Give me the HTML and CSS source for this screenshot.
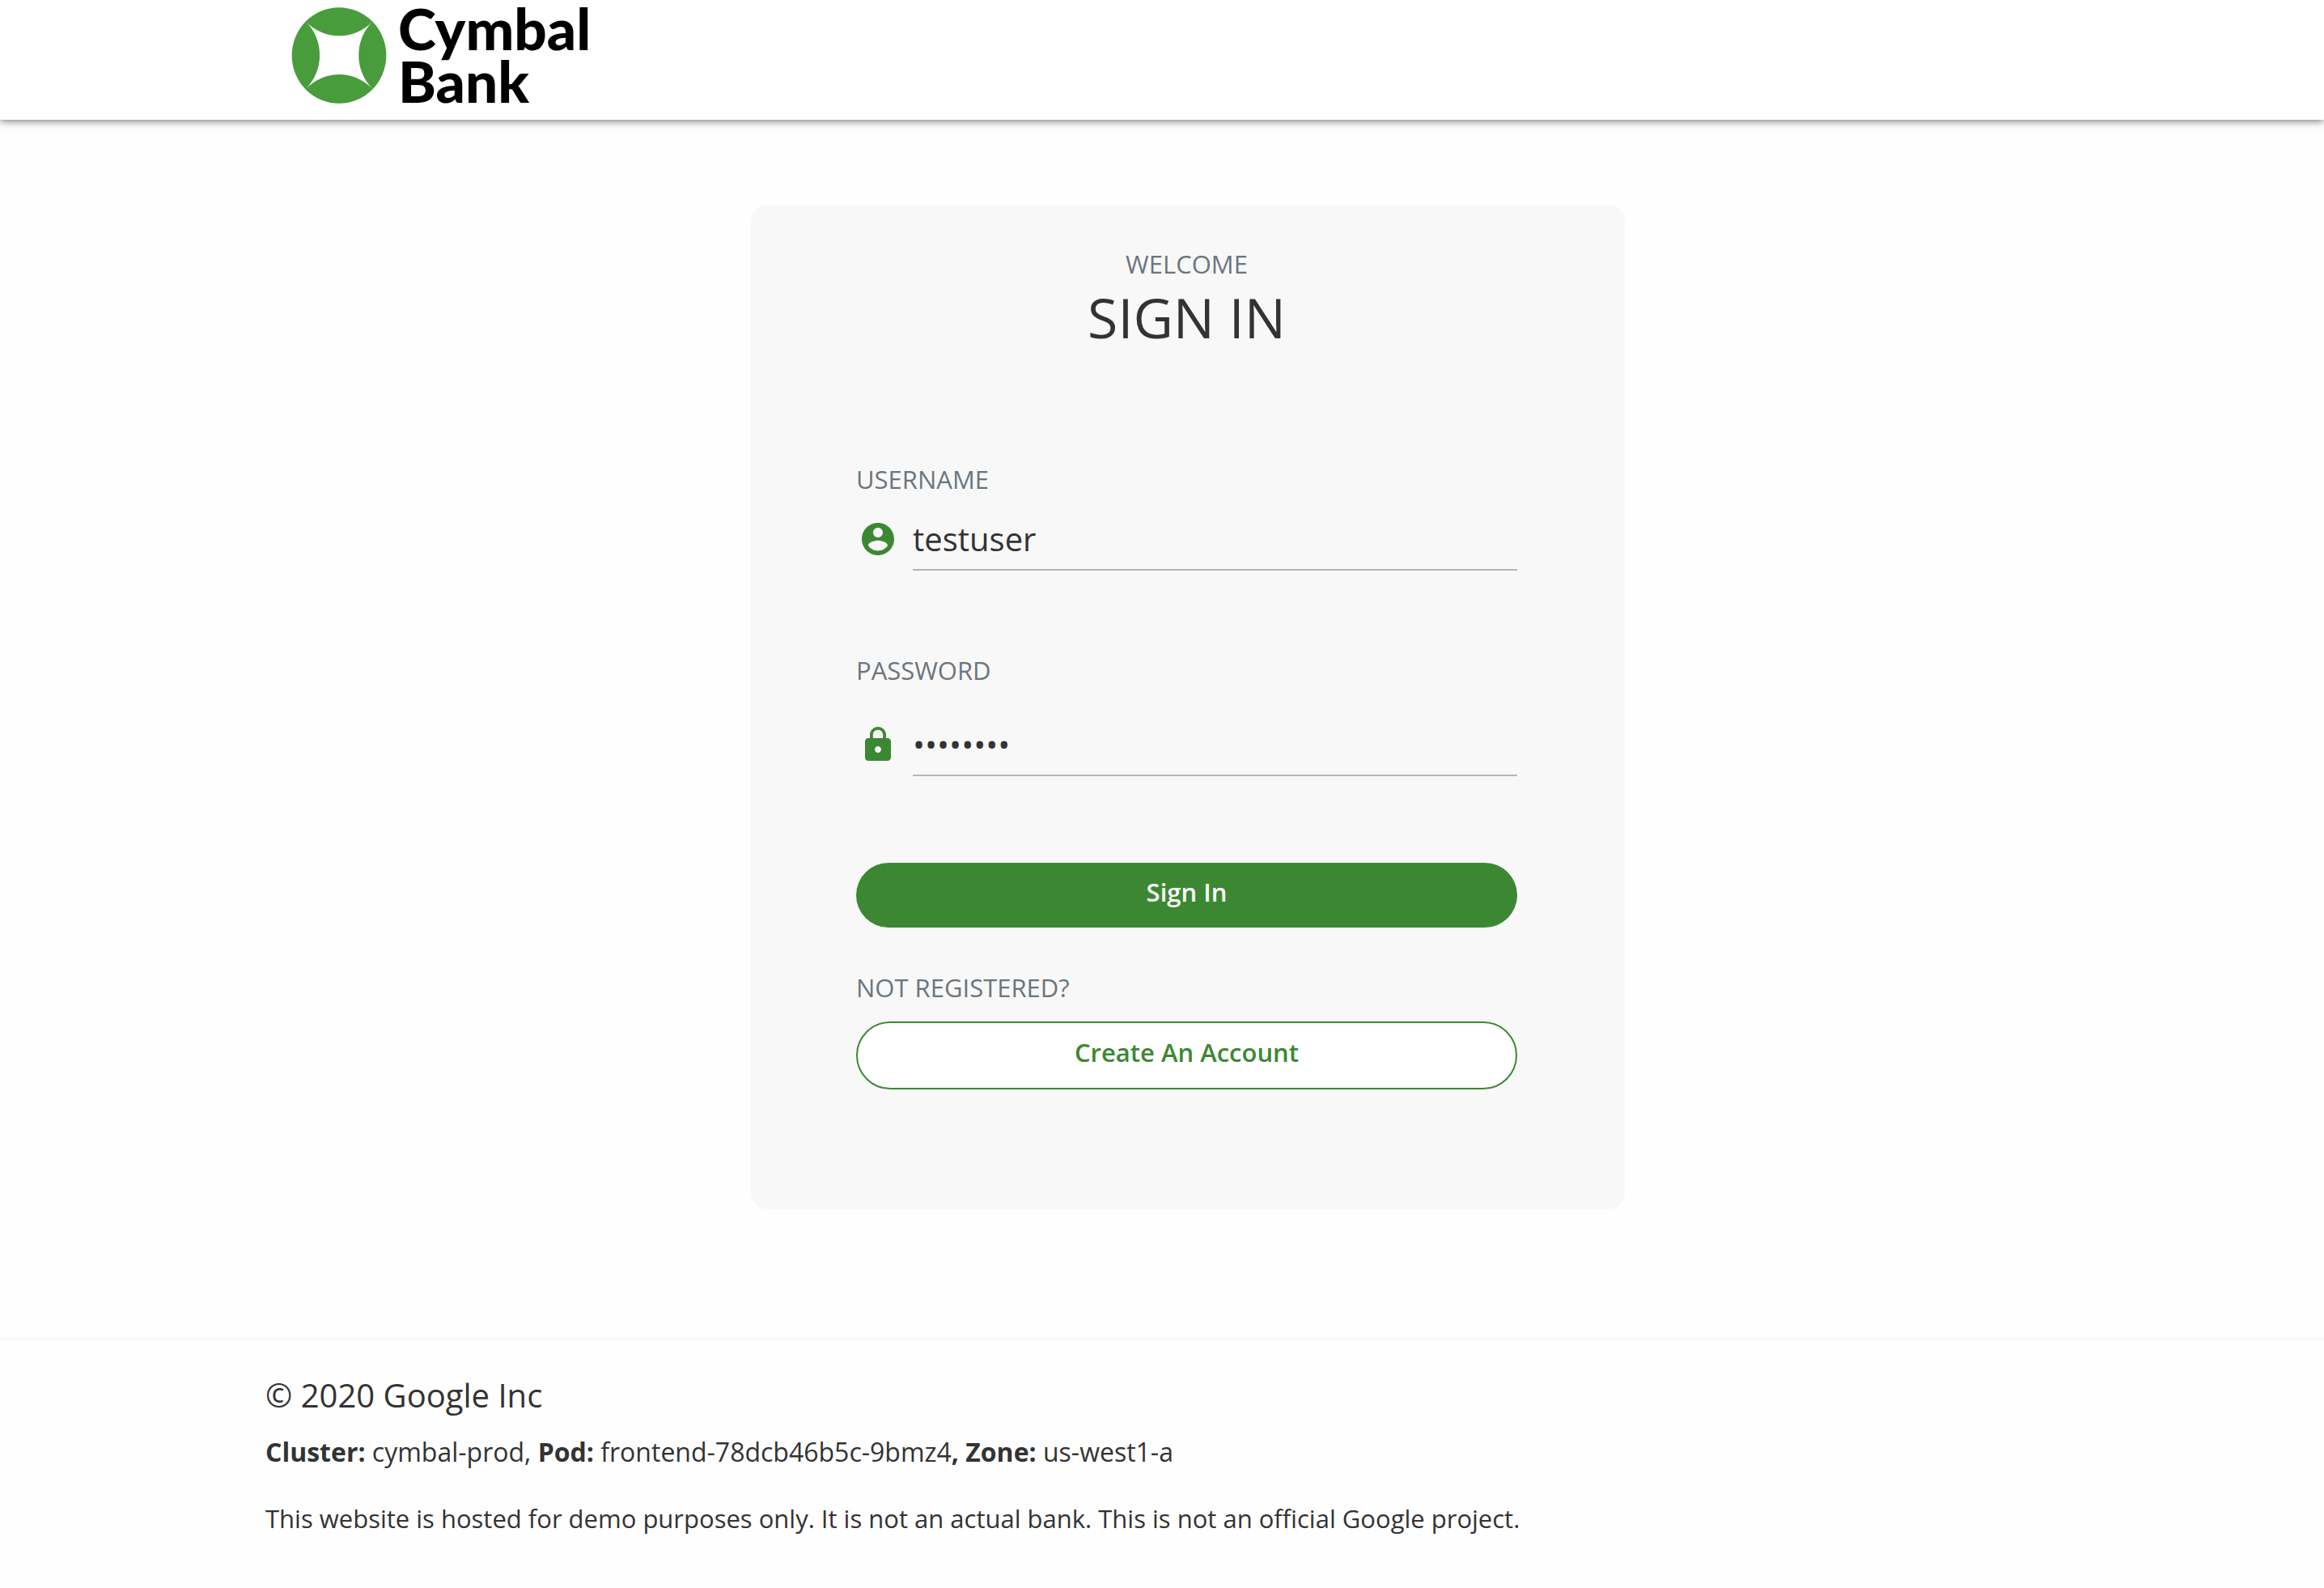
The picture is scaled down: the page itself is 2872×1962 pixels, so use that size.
FILE: index.html
```html
<!DOCTYPE html>
<html lang="en">
<head>
  <meta charset="utf-8">
  <meta name="viewport" content="width=device-width, initial-scale=1">
  <title>Cymbal Bank</title>
  <link rel="stylesheet" href="styles.css">
</head>
<body>
  <header class="header">
    <div class="container container-inset">
      <a class="logo" href="#">
        <svg class="logo-mark" viewBox="12 27 353 357" aria-hidden="true">
          <ellipse cx="188.500" cy="205.500" rx="175" ry="178" fill="#489c3c"/>
          <path d="M66 80A170 170 0 0 0 312 80A178 178 0 0 0 312 329A170 170 0 0 0 66 329A178 178 0 0 0 66 80Z" fill="#fff"/>
        </svg>
        <span class="logo-text">Cymbal<br>Bank</span>
      </a>
    </div>
  </header>

  <main class="container container-inset main">
    <section class="card">
      <div class="card-head">
        <p class="label">WELCOME</p>
        <h1 class="title">SIGN IN</h1>
      </div>
      <form class="form">
        <label class="label" for="username">USERNAME</label>
        <div class="field">
          <svg class="field-icon" viewBox="0 0 24 24" aria-hidden="true"><path d="M12 2C6.480 2 2 6.480 2 12s4.480 10 10 10 10-4.480 10-10S17.520 2 12 2zm0 3c1.660 0 3 1.340 3 3s-1.340 3-3 3-3-1.340-3-3 1.340-3 3-3zm0 14.200c-2.500 0-4.710-1.280-6-3.220.03-1.990 4-3.080 6-3.080 1.990 0 5.970 1.090 6 3.080-1.290 1.940-3.500 3.220-6 3.220z"/></svg>
          <input class="input" id="username" type="text" value="testuser">
        </div>
        <label class="label label-password" for="password">PASSWORD</label>
        <div class="field field-password">
          <svg class="field-icon" viewBox="0 0 24 24" aria-hidden="true"><path d="M18 8h-1V6c0-2.760-2.240-5-5-5S7 3.240 7 6v2H6c-1.100 0-2 .9-2 2v10c0 1.100.9 2 2 2h12c1.100 0 2-.9 2-2V10c0-1.100-.9-2-2-2zm-6 9c-1.100 0-2-.9-2-2s.9-2 2-2 2 .9 2 2-.9 2-2 2zm3.100-9H8.900V6c0-1.710 1.390-3.100 3.100-3.100 1.710 0 3.100 1.390 3.100 3.100v2z"/></svg>
          <input class="input" id="password" type="password" value="password">
        </div>
        <button class="button button-primary" type="button">Sign In</button>
      </form>
      <div class="register">
        <p class="label">NOT REGISTERED?</p>
        <a class="button button-outline" href="#">Create An Account</a>
      </div>
    </section>
  </main>

  <footer class="footer">
    <div class="container">
      <p class="copyright">© 2020 Google Inc</p>
      <p class="footer-info"><b>Cluster:</b> cymbal-prod, <b>Pod:</b> frontend-78dcb46b5c-9bmz4<b>, Zone:</b> us-west1-a</p>
      <p class="footer-note">This website is hosted for demo purposes only. It is not an actual bank. This is not an official Google project.</p>
    </div>
  </footer>
</body>
</html>
```
FILE: styles.css
```css
* {
  box-sizing: border-box;
}

body {
  margin: 0;
  background: #fefefe;
  color: #333;
  font-family: "Open Sans", "Noto Sans", sans-serif;
  font-size: 31px;
  line-height: 48px;
}

h1,
p {
  margin: 0;
  font-weight: 400;
}

.container {
  max-width: 2280px;
  margin: 0 auto;
  padding: 0 32px;
}

.container-inset {
  padding: 0 0 0 64px;
}

/* Header */
.header {
  padding-bottom: 16px;
  background: #fff;
  box-shadow: 0 2px 9px rgba(0, 0, 0, 0.5);
}

.logo {
  display: flex;
  align-items: center;
  gap: 14px;
  width: fit-content;
  color: #000;
  text-decoration: none;
}

.logo-mark {
  width: 118px;
  height: 119px;
  margin-top: 5px;
}

.logo-text {
  padding-top: 2px;
  font-family: Lato, sans-serif;
  font-size: 71px;
  font-weight: 900;
  line-height: 65px;
}

/* Sign-in card */
.main {
  padding-top: 106px;
  padding-bottom: 158px;
}

.card {
  max-width: 1080px;
  margin: 0 auto;
  padding: 48px 133px 148px 130px;
  border-radius: 20px;
  background: #f8f8f8;
}

.card-head {
  text-align: center;
}

.title {
  font-size: 68px;
  line-height: 84px;
}

.label {
  display: block;
  color: #6c757d;
}

.form {
  margin-top: 134px;
}

.label-password {
  margin-top: 99px;
}

.field {
  display: flex;
  gap: 19px;
  margin-top: 20px;
  padding-left: 3px;
}

.field-password {
  margin-top: 38px;
}

.field-icon {
  flex: none;
  width: 48px;
  height: 48px;
  margin-top: 6px;
  fill: #3c8832;
}

.input {
  flex: 1;
  min-width: 0;
  height: 69px;
  padding: 0 0 9px;
  border: 0;
  border-bottom: 2px solid #b5b5b5;
  border-radius: 0;
  outline: 0;
  background: transparent;
  color: #333;
  font: 40px/58px "Open Sans", "Noto Sans", sans-serif;
}

.button {
  display: block;
  width: 100%;
  padding: 12px 0 20px;
  border: 0;
  border-radius: 42px;
  font: 600 31px/48px "Open Sans", "Noto Sans", sans-serif;
  text-align: center;
  text-decoration: none;
}

.button-primary {
  margin-top: 107px;
  background: #3c8832;
  color: #fff;
}

.button-outline {
  margin-top: 18px;
  border: 2px solid #3c8832;
  background: #fff;
  color: #3c8832;
}

.register {
  margin-top: 50px;
}

/* Footer */
.footer {
  padding: 38px 0 62px;
  border-top: 4px solid #f8f8f8;
}

.copyright {
  font-size: 40px;
  line-height: 60px;
}

.footer-info {
  margin-top: 16px;
  font-size: 32px;
}

.footer-note {
  margin-top: 34px;
}
```
